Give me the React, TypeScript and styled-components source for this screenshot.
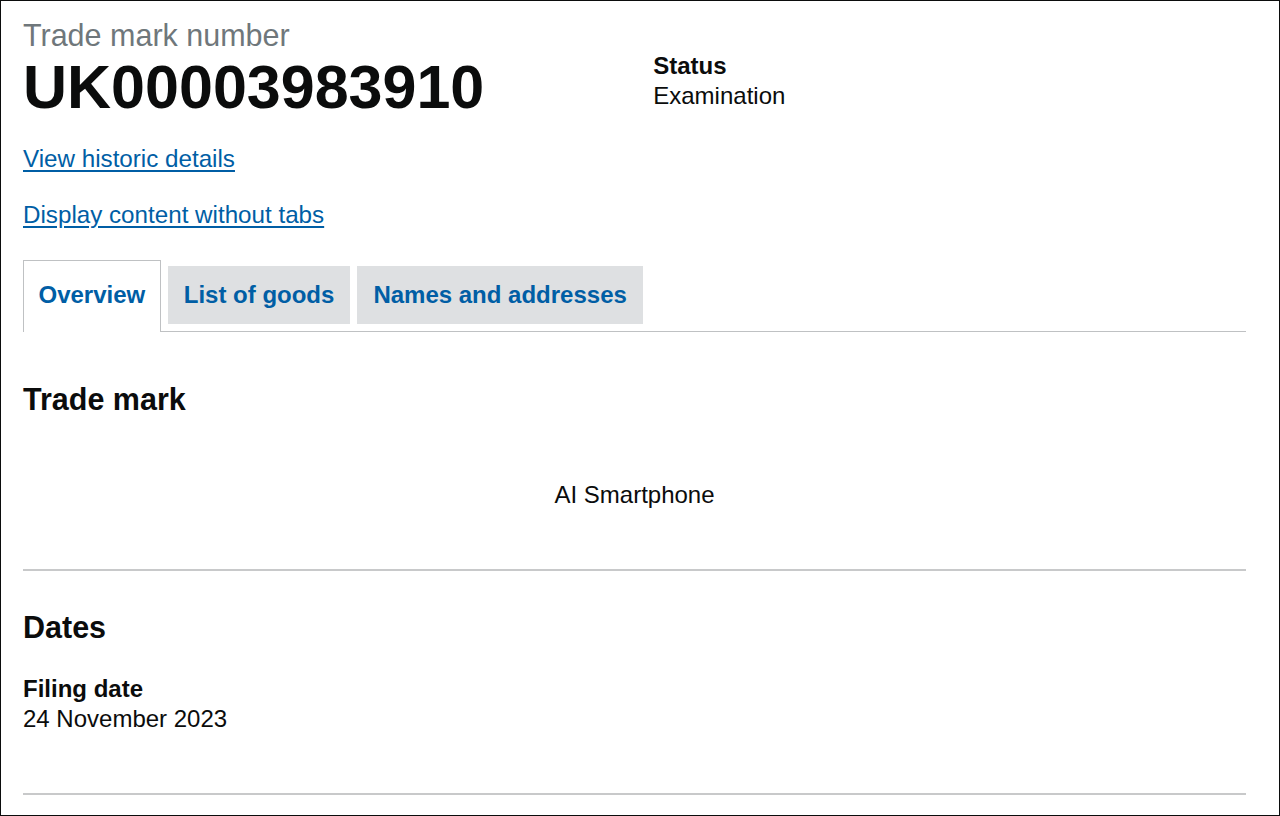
import React from 'react'
import styled, { createGlobalStyle, css } from 'styled-components'

const GlobalStyle = createGlobalStyle`
	html, body {
		margin: 0;
		padding: 0;
		background: #ffffff;
	}
	body {
		font-family: 'Liberation Sans', Arial, sans-serif;
		color: #0b0c0c;
		-webkit-font-smoothing: antialiased;
	}
	* {
		box-sizing: border-box;
	}
`

const Frame = styled.main`
	height: 816px;
	border: 1px solid #0b0c0c;
	padding: 16px 33px 0 22px;
	overflow: hidden;
`

const Header = styled.div`
	display: grid;
	grid-template-columns: 1fr 1fr;
	column-gap: 37.5px;
`

const Caption = styled.span`
	display: block;
	font-size: 30.5px;
	line-height: 37.5px;
	color: #6f777b;
`

const Title = styled.h1`
	margin: 0;
	font-size: 61px;
	line-height: 64.5px;
	font-weight: 700;
`

const StatusList = styled.dl`
	margin: 0;
	padding-top: 34px;
`

const Term = styled.dt`
	font-size: 24px;
	line-height: 30px;
	font-weight: 700;
`

const Value = styled.dd`
	margin: 0;
	font-size: 24px;
	line-height: 30px;
`

const Links = styled.div`
	display: flex;
	flex-direction: column;
	align-items: flex-start;
	gap: 26px;
	padding: 25px 0 30px;
`

const Link = styled.a`
	font-size: 24.2px;
	line-height: 30px;
	color: #005ea5;
	text-decoration: underline;
	text-underline-offset: 3px;
	cursor: pointer;
`

const TabList = styled.ul`
	display: flex;
	align-items: flex-end;
	gap: 7px;
	margin: 0;
	padding: 0;
	list-style: none;
	border-bottom: 1px solid #bfc1c3;
`

const Tab = styled.li<{ selected?: boolean }>`
	font-size: 24px;
	line-height: 30px;
	font-weight: 700;
	color: #005ea5;
	cursor: pointer;
	${(props) =>
		props.selected
			? css`
					padding: 19px 14.5px 22px;
					margin-bottom: -1px;
					border: 1px solid #bfc1c3;
					border-bottom: 0;
					background: #ffffff;
			  `
			: css`
					padding: 14px 16px;
					margin-bottom: 7px;
					background: #dee0e2;
			  `}
`

const Panel = styled.section`
	padding-top: 49px;
`

const SectionHeading = styled.h2<{ spaced?: boolean }>`
	margin: ${(props) => (props.spaced ? '38px' : '0')} 0 0;
	font-size: 30.5px;
	line-height: 37.5px;
	font-weight: 700;
`

const MarkText = styled.p`
	margin: 61.5px 0 0;
	font-size: 24px;
	line-height: 30px;
	text-align: center;
`

const Divider = styled.hr`
	margin: 59px 0 0;
	height: 2px;
	border: 0;
	background: #c8c9ca;
`

const DateList = styled.dl`
	margin: 27px 0 0;
`

export default function App() {
	return (
		<>
			<GlobalStyle />
			<Frame>
				<Header>
					<div>
						<Caption>Trade mark number</Caption>
						<Title>UK00003983910</Title>
					</div>
					<StatusList>
						<Term>Status</Term>
						<Value>Examination</Value>
					</StatusList>
				</Header>

				<Links>
					<Link>View historic details</Link>
					<Link>Display content without tabs</Link>
				</Links>

				<TabList>
					<Tab selected>Overview</Tab>
					<Tab>List of goods</Tab>
					<Tab>Names and addresses</Tab>
				</TabList>

				<Panel>
					<SectionHeading>Trade mark</SectionHeading>
					<MarkText>AI Smartphone</MarkText>
					<Divider />

					<SectionHeading spaced>Dates</SectionHeading>
					<DateList>
						<Term>Filing date</Term>
						<Value>24 November 2023</Value>
					</DateList>
					<Divider />
				</Panel>
			</Frame>
		</>
	)
}
